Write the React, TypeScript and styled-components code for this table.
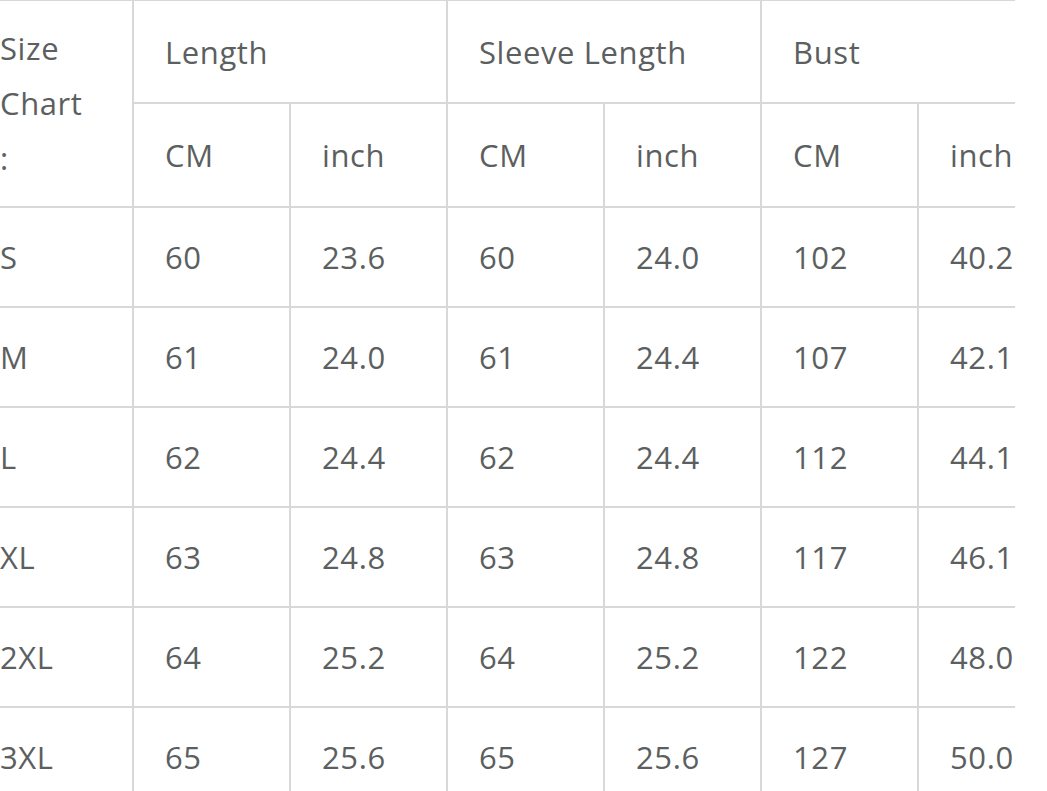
import { createGlobalStyle } from "styled-components";
import styled from "styled-components";

const GlobalStyle = createGlobalStyle`
  html, body {
    margin: 0;
    padding: 0;
    background: #ffffff;
  }
`;

const Frame = styled.div`
  width: 1015px;
  height: 791px;
  overflow: hidden;
  background: #ffffff;
`;

const Table = styled.table`
  margin-left: -31px;
  margin-top: -1px;
  border-collapse: collapse;
  table-layout: fixed;
  width: 1106px;
  font-family: "Open Sans", "Noto Sans", sans-serif;
  font-size: 31px;
  letter-spacing: 0.6px;
  color: #5c5f5f;
`;

const Cell = styled.td<{ $h?: number }>`
  border: 2px solid #d8d8d8;
  padding: 0 0 0 31px;
  height: ${(p) => p.$h ?? 98}px;
  vertical-align: middle;
  text-align: left;
  font-weight: 400;
  white-space: nowrap;
`;

const CornerCell = styled(Cell)`
  white-space: normal;
  line-height: 55px;
  border-left: none;
`;

const CornerText = styled.span`
  display: block;
  width: 95px;
`;

const SizeCell = styled(Cell)`
  border-left: none;
`;

const headers = ["Length", "Sleeve Length", "Bust"];

const rows: [string, ...string[]][] = [
  ["S", "60", "23.6", "60", "24.0", "102", "40.2"],
  ["M", "61", "24.0", "61", "24.4", "107", "42.1"],
  ["L", "62", "24.4", "62", "24.4", "112", "44.1"],
  ["XL", "63", "24.8", "63", "24.8", "117", "46.1"],
  ["2XL", "64", "25.2", "64", "25.2", "122", "48.0"],
  ["3XL", "65", "25.6", "65", "25.6", "127", "50.0"],
];

export default function App() {
  return (
    <>
      <GlobalStyle />
      <Frame>
        <Table>
          <colgroup>
            <col style={{ width: 164 }} />
            {Array.from({ length: 6 }).map((_, i) => (
              <col key={i} style={{ width: 157 }} />
            ))}
          </colgroup>
          <tbody>
            <tr>
              <CornerCell rowSpan={2}>
                <CornerText>Size Chart :</CornerText>
              </CornerCell>
              {headers.map((h) => (
                <Cell key={h} colSpan={2} $h={101}>
                  {h}
                </Cell>
              ))}
            </tr>
            <tr>
              {headers.map((h) => [
                <Cell key={h + "cm"} $h={102}>CM</Cell>,
                <Cell key={h + "in"} $h={102}>inch</Cell>,
              ])}
            </tr>
            {rows.map(([size, ...vals]) => (
              <tr key={size}>
                <SizeCell>{size}</SizeCell>
                {vals.map((v, i) => (
                  <Cell key={i}>{v}</Cell>
                ))}
              </tr>
            ))}
          </tbody>
        </Table>
      </Frame>
    </>
  );
}
